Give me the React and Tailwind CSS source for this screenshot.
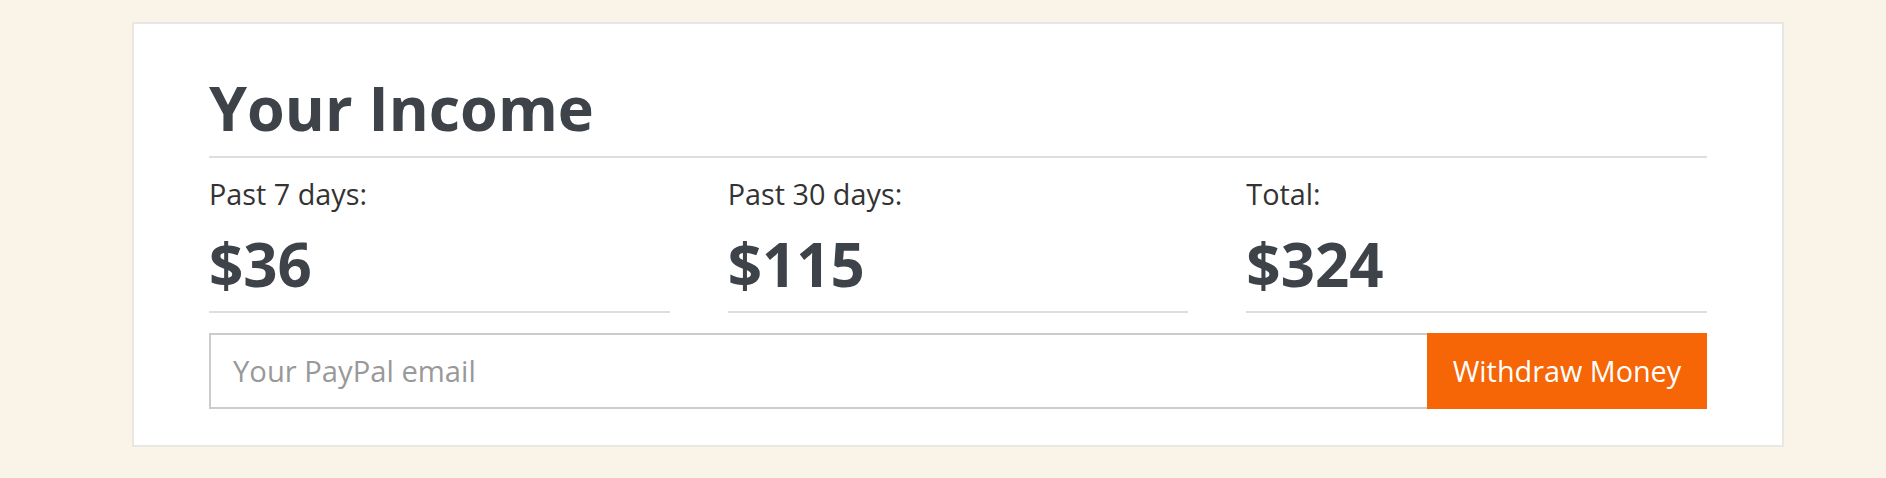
import React from "react";

export default function App() {
  // Income summary card
  const stats = [
    { label: "Past 7 days:", value: "$36" },
    { label: "Past 30 days:", value: "$115" },
    { label: "Total:", value: "$324" }
  ];

  return (
    <div className="min-h-screen bg-[#faf3e8] pt-[22px] font-['Open_Sans',sans-serif]">
      <div className="ml-[132px] w-[1652px] border-2 border-[#e9e7e3] bg-white px-[75px] pt-[46px] pb-[36px]">
        <h1 className="border-b-2 border-[#dedede] pb-[10px] text-[61px] leading-[76px] font-bold text-[#3d4349]">
          Your Income
        </h1>

        <div className="grid grid-cols-3 gap-x-[58px] pt-[16px]">
          {stats.map((stat) => (
            <div key={stat.label} className="border-b-2 border-[#dedede] pb-[11px]">
              <p className="text-[28.8px] leading-[40px] text-[#333]">{stat.label}</p>
              <p className="mt-[14px] text-[60px] leading-[72px] font-bold text-[#3d4349]">{stat.value}</p>
            </div>
          ))}
        </div>

        <div className="mt-[20px] flex h-[76px]">
          <input
            type="text"
            placeholder="Your PayPal email"
            className="h-full flex-1 border-2 border-r-0 border-[#cccccc] bg-white pl-[22px] text-[29.2px] text-[#333] outline-none placeholder:text-[#999]"
          />
          <button className="h-full w-[280px] bg-[#f66506] text-[28.8px] text-white">
            Withdraw Money
          </button>
        </div>
      </div>
    </div>
  );
}
